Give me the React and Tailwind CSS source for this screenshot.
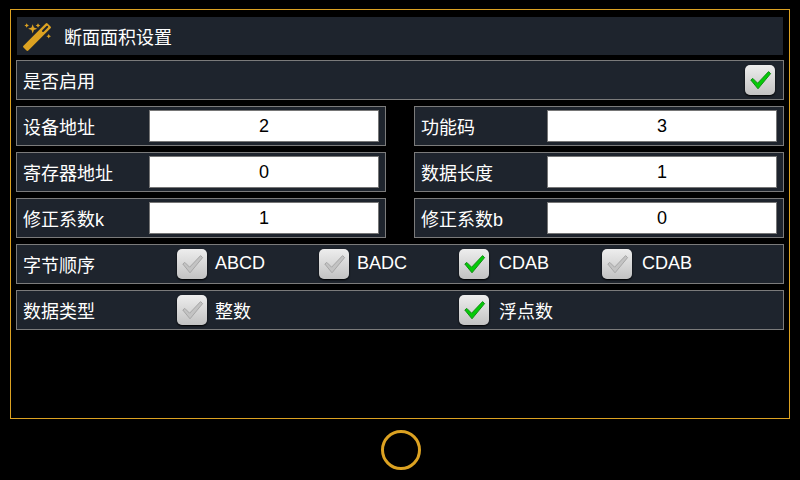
import React, { useId, useState } from "react";

const ROW = "flex h-10 items-center border border-[#7b7b7b] bg-[#1e242d] pl-1.5";

function WandIcon() {
  return (
    <svg viewBox="0 0 28 28" className="size-7 shrink-0 fill-[#dca222]" aria-hidden="true">
      <path
        d="M1.4 23.6 4.4 26.6 26.6 4.4 23.6 1.4Z"
        stroke="#dca222"
        strokeWidth="2.6"
        strokeLinejoin="round"
      />
      <path d="M20 8 24.2 3.8" stroke="#1e242d" strokeWidth="2" strokeLinecap="round" />
      <path d="M9.7 1.2 10.9 4.6 14.3 5.8 10.9 7 9.7 10.4 8.5 7 5.1 5.8 8.5 4.6Z" />
      <path d="M3.7.2 4.5 1.7 6 2.5 4.5 3.3 3.7 4.8 2.9 3.3 1.4 2.5 2.9 1.7Z" />
      <path d="M15 .2 15.8 1.7 17.3 2.5 15.8 3.3 15 4.8 14.2 3.3 12.7 2.5 14.2 1.7Z" />
      <path d="M25.7 11 26.5 12.5 28 13.3 26.5 14.1 25.7 15.6 24.9 14.1 23.4 13.3 24.9 12.5Z" />
    </svg>
  );
}

function Tick({ id, label, type = "checkbox", name, checked, onChange }) {
  return (
    <span className="grid size-[30px] shrink-0">
      <input
        id={id}
        type={type}
        name={name}
        aria-label={label}
        checked={checked}
        onChange={onChange}
        className="col-start-1 row-start-1 size-[30px] cursor-pointer appearance-none rounded-[5px] bg-linear-to-b from-[#eeeeee] to-[#c2c2c2] shadow-[0_1px_2px_#000]"
      />
      <svg
        viewBox="0 0 30 30"
        className="pointer-events-none col-start-1 row-start-1 size-[30px]"
        aria-hidden="true"
      >
        <path
          d="M5.8 15 7.8 13.4 12.6 18.2 23.6 6.6 25.6 8.6 13 23.8Z"
          fill={checked ? "#04cb08" : "#c3c3c3"}
          stroke={checked ? "#128a14" : "#a6a6a6"}
          strokeWidth="1"
          strokeLinejoin="round"
        />
      </svg>
    </span>
  );
}

function Field({ label, value }) {
  const id = useId();
  const [text, setText] = useState(value);
  return (
    <div className={`${ROW} pr-1.5`}>
      <label htmlFor={id} className="w-[126px] shrink-0 pt-1">
        {label}
      </label>
      <input
        id={id}
        type="text"
        value={text}
        onChange={(e) => setText(e.target.value)}
        className="h-8 min-w-0 flex-1 border border-[#767676] bg-white text-center text-black"
      />
    </div>
  );
}

function Options({ title, name, items, initial }) {
  const [selected, setSelected] = useState(initial);
  const base = useId();
  return (
    <div role="radiogroup" aria-label={title} className={`${ROW} pr-10`}>
      <span className="w-[154px] shrink-0 pt-1">{title}</span>
      <div className="grid flex-1 grid-cols-[142fr_140fr_143fr_141fr]">
        {items.map((item, i) => (
          <div key={i} className={`flex items-center ${item.className}`}>
            <Tick
              id={`${base}-${i}`}
              type="radio"
              name={name}
              checked={selected === i}
              onChange={() => setSelected(i)}
            />
            <label htmlFor={`${base}-${i}`} className={item.text}>
              {item.label}
            </label>
          </div>
        ))}
      </div>
    </div>
  );
}

export default function App() {
  const [enabled, setEnabled] = useState(true);
  return (
    <div className="flex min-h-screen flex-col bg-black px-2.5 pt-[9px] pb-2.5 font-['Liberation_Sans','Noto_Sans_CJK_SC',sans-serif] text-lg leading-6 text-white">
      <main className="flex flex-1 flex-col gap-1.5 border border-[#dca222] px-[5px] pt-[7px]">
        <header className="mx-px -mb-px flex h-[38px] items-center gap-[13px] bg-[#1e242d] pt-px pl-1.5">
          <WandIcon />
          <h1 className="pt-0.5">断面面积设置</h1>
        </header>

        <div className={`${ROW} justify-between pr-2`}>
          <label htmlFor="enabled" className="pt-1">
            是否启用
          </label>
          <Tick id="enabled" checked={enabled} onChange={() => setEnabled(!enabled)} />
        </div>

        <div className="grid grid-cols-2 gap-x-7 gap-y-1.5">
          <Field label="设备地址" value="2" />
          <Field label="功能码" value="3" />
          <Field label="寄存器地址" value="0" />
          <Field label="数据长度" value="1" />
          <Field label="修正系数k" value="1" />
          <Field label="修正系数b" value="0" />
        </div>

        <Options
          title="字节顺序"
          name="byte-order"
          initial={2}
          items={[
            { label: "ABCD", className: "gap-2", text: "pb-0.5" },
            { label: "BADC", className: "gap-2", text: "pb-0.5" },
            { label: "CDAB", className: "gap-2.5", text: "pb-0.5" },
            { label: "CDAB", className: "gap-2.5", text: "pb-0.5" },
          ]}
        />
        <Options
          title="数据类型"
          name="data-type"
          initial={1}
          items={[
            { label: "整数", className: "gap-2", text: "pt-1" },
            { label: "浮点数", className: "col-start-3 gap-2.5", text: "pt-1" },
          ]}
        />
      </main>

      <footer className="flex justify-center pt-[11px] pl-0.5">
        <button
          type="button"
          aria-label="返回"
          className="size-10 cursor-pointer rounded-full border-3 border-[#dca222]"
        />
      </footer>
    </div>
  );
}
